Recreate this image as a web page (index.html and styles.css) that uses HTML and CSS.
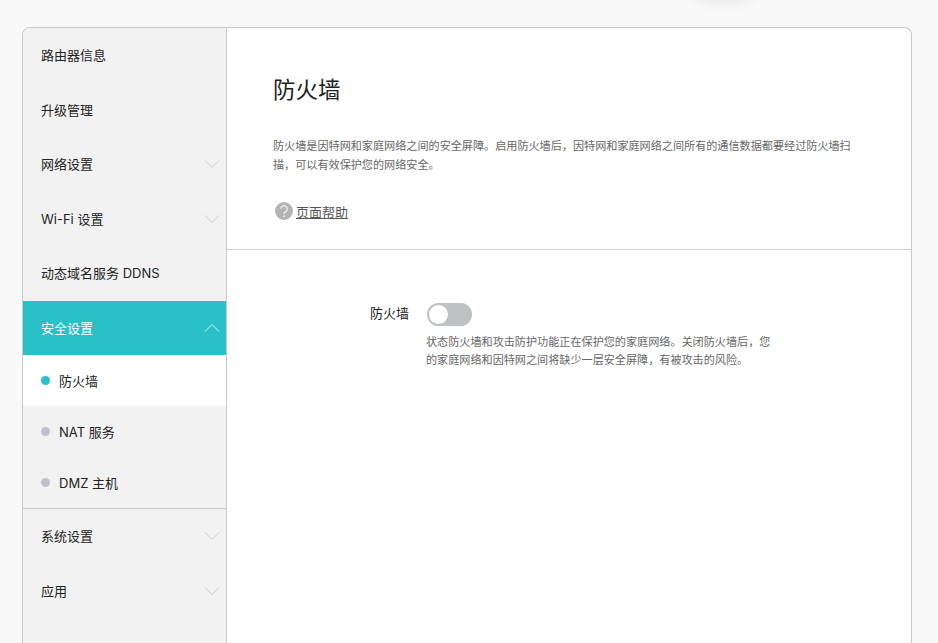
FILE: index.html
```html
<!DOCTYPE html>
<html lang="zh-CN">
<head>
<meta charset="utf-8">
<title>防火墙</title>
<link rel="stylesheet" href="styles.css">
</head>
<body>
<div class="top-glow"></div>
<div class="card">
  <nav class="side">
    <a class="item">路由器信息</a>
    <a class="item">升级管理</a>
    <a class="item">网络设置<svg class="chev" viewBox="0 0 16 10"><path d="M1 1.5 8 8.5 15 1.5"/></svg></a>
    <a class="item">Wi-Fi 设置<svg class="chev" viewBox="0 0 16 10"><path d="M1 1.5 8 8.5 15 1.5"/></svg></a>
    <a class="item">动态域名服务 DDNS</a>
    <a class="item active">安全设置<svg class="chev" viewBox="0 0 16 10"><path d="M1 8.5 8 1.5 15 8.5"/></svg></a>
    <div class="sub">
      <a class="sub-item current"><i class="dot"></i>防火墙</a>
      <a class="sub-item"><i class="dot"></i>NAT 服务</a>
      <a class="sub-item"><i class="dot"></i>DMZ 主机</a>
    </div>
    <a class="item">系统设置<svg class="chev" viewBox="0 0 16 10"><path d="M1 1.5 8 8.5 15 1.5"/></svg></a>
    <a class="item">应用<svg class="chev" viewBox="0 0 16 10"><path d="M1 1.5 8 8.5 15 1.5"/></svg></a>
  </nav>
  <main class="main">
    <header class="head">
      <h1>防火墙</h1>
      <p class="desc">防火墙是因特网和家庭网络之间的安全屏障。启用防火墙后，因特网和家庭网络之间所有的通信数据都要经过防火墙扫描，可以有效保护您的网络安全。</p>
      <div class="help">
        <svg class="help-icon" viewBox="0 0 18 18"><circle cx="9" cy="9" r="9" fill="#b4b4b4"/><path d="M5.800 6.800a3.200 3.200 0 1 1 5 2.700C9.700 10.200 9 10.700 9 12" fill="none" stroke="#e6e6e6" stroke-width="1.500"/><circle cx="9" cy="14.300" r="1" fill="#e6e6e6"/></svg>
        <a class="help-link">页面帮助</a>
      </div>
    </header>
    <section class="form">
      <div class="row">
        <span class="label">防火墙</span>
        <div class="field">
          <span class="switch"><i class="knob"></i></span>
          <p class="note">状态防火墙和攻击防护功能正在保护您的家庭网络。关闭防火墙后，您的家庭网络和因特网之间将缺少一层安全屏障，有被攻击的风险。</p>
        </div>
      </div>
    </section>
  </main>
</div>
</body>
</html>
```
FILE: styles.css
```css
* { box-sizing: border-box; }
html, body { margin: 0; height: 100%; overflow: hidden; }
body {
  background: #f9f9f9;
  font-family: Inter, "Noto Sans CJK SC", sans-serif;
  color: #222;
  padding: 27px 26px 0 22px;
  position: relative;
}
.top-glow {
  position: absolute;
  top: -24px;
  left: 692px;
  width: 64px;
  height: 28px;
  border-radius: 50%;
  background: #e9e9e9;
  filter: blur(5px);
}
.card {
  position: relative;
  display: flex;
  width: 890px;
  height: 640px;
  background: #fff;
  border: 1px solid #c9c9c9;
  border-bottom: 0;
  border-radius: 8px 8px 0 0;
  overflow: hidden;
}
.side {
  width: 204px;
  flex: none;
  background: #f2f2f2;
  border-right: 1px solid #c9c9c9;
  display: flex;
  flex-direction: column;
}
.item {
  height: 54.5px;
  flex: none;
  display: flex;
  align-items: center;
  justify-content: space-between;
  padding: 0 6px 1px 18px;
  font-size: 13px;
  color: #222;
}
.chev {
  width: 16px;
  height: 10px;
  margin-top: 1px;
  fill: none;
  stroke: #c8c8c8;
  stroke-width: 1;
}
.item.active {
  background: #29c0c7;
  color: #fff;
}
.item.active .chev { stroke: #d5f1f2; }
.sub {
  border-bottom: 1px solid #c9c9c9;
}
.sub-item {
  height: 51px;
  display: flex;
  align-items: center;
  padding-left: 18px;
  font-size: 13px;
  color: #222;
}
.sub-item.current { background: #fff; }
.dot {
  width: 9px;
  height: 9px;
  border-radius: 50%;
  background: #c0c1cb;
  margin-right: 9px;
}
.current .dot { background: #29c0c7; }
.main {
  flex: 1;
  min-width: 0;
}
.head {
  height: 222px;
  border-bottom: 1px solid #cfcfcf;
  padding: 47px 46px 0;
}
.head h1 {
  margin: 0;
  font-size: 22.500px;
  font-weight: 400;
  line-height: 30px;
  color: #222;
}
.desc {
  margin: 32px 0 0;
  width: 590px;
  font-size: 11.110px;
  line-height: 19px;
  color: #666;
}
.help {
  display: flex;
  align-items: flex-start;
  margin-top: 27px;
  padding-left: 2px;
}
.help-icon {
  width: 18px;
  height: 18px;
  margin-right: 3px;
}
.help-link {
  margin-top: 1px;
  font-size: 13px;
  line-height: 18px;
  color: #555;
  text-decoration: underline;
}
.form {
  padding-top: 53px;
}
.row {
  display: flex;
}
.label {
  width: 182px;
  text-align: right;
  font-size: 13px;
  line-height: 20px;
  color: #222;
}
.field {
  margin-left: 17px;
  width: 352px;
}
.switch {
  display: block;
  position: relative;
  width: 45px;
  height: 23px;
  margin-left: 1px;
  border-radius: 12px;
  background: #bfc2c2;
}
.knob {
  position: absolute;
  left: 1.500px;
  top: 2px;
  width: 19px;
  height: 19px;
  border-radius: 50%;
  background: #fff;
}
.note {
  margin: 7px 0 0;
  font-size: 11.110px;
  line-height: 18px;
  color: #666;
}
```
